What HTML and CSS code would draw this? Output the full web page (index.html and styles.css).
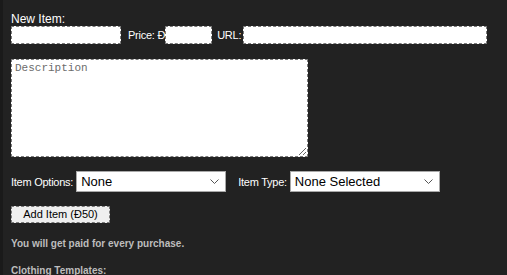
FILE: index.html
```html
<!DOCTYPE html>
<html>
<head>
<meta charset="utf-8">
<link rel="stylesheet" href="styles.css">
</head>
<body>
<div class="page">
  <div class="label-line">New Item:</div>
  <div class="row-inputs">
    <input class="in in-name" type="text">
    <span class="lbl lbl-price">Price: Đ</span><input class="in in-price" type="text">
    <span class="lbl lbl-url">URL:</span><input class="in in-url" type="text">
  </div>
  <textarea class="desc" placeholder="Description"></textarea>
  <div class="row-selects">
    <span class="lbl">Item Options:</span>
    <span class="sel-wrap">
      <select class="sel"><option>None</option></select>
      <svg class="chev" width="9" height="5" viewBox="0 0 9 5"><path d="M0.5 0.5 L4.5 4.5 L8.5 0.5" fill="none" stroke="#555" stroke-width="1"/></svg>
    </span>
    <span class="lbl lbl-type">Item Type:</span>
    <span class="sel-wrap">
      <select class="sel"><option>None Selected</option></select>
      <svg class="chev" width="9" height="5" viewBox="0 0 9 5"><path d="M0.5 0.5 L4.5 4.5 L8.5 0.5" fill="none" stroke="#555" stroke-width="1"/></svg>
    </span>
  </div>
  <button class="add-btn" type="button">Add Item (Đ50)</button>
  <p class="note">You will get paid for every purchase.</p>
  <p class="note note-templates">Clothing Templates:</p>
</div>
</body>
</html>
```
FILE: styles.css
```css
html, body {
  margin: 0;
  padding: 0;
  background: #222222;
  height: 100%;
  overflow: hidden;
}
.page {
  box-sizing: border-box;
  min-height: 100%;
  border-left: 3px solid #1a1a1a;
  padding: 12px 0 0 8px;
  font-family: "Liberation Sans", Arial, sans-serif;
  font-size: 11px;
  color: #ffffff;
}
.label-line {
  height: 14px;
  line-height: 14px;
  font-size: 12px;
}
.row-inputs {
  display: flex;
  align-items: center;
  height: 18px;
}
.in {
  box-sizing: border-box;
  height: 18px;
  margin: 0;
  padding: 0 2px;
  background: #ffffff;
  border: 1px dashed #7a7a7a;
  outline: none;
  font-size: 12px;
}
.in-name { width: 110px; }
.in-price { width: 47px; }
.in-url { width: 244px; }
.lbl {
  font-size: 11px;
  letter-spacing: -0.25px;
  white-space: nowrap;
}
.lbl-price { margin-left: 7px; }
.lbl-url { margin-left: 5px; margin-right: 2px; }
.desc {
  display: block;
  box-sizing: border-box;
  width: 297px;
  height: 98px;
  margin: 15px 0 0 0;
  padding: 2px 3px;
  background: #ffffff;
  border: 1px dashed #7a7a7a;
  outline: none;
  font-family: "Liberation Mono", "Courier New", monospace;
  font-size: 11px;
}
.desc::placeholder { color: #6d6d6d; }
.row-selects {
  display: flex;
  align-items: center;
  margin-top: 14px;
  height: 21px;
}
.sel-wrap {
  position: relative;
  display: inline-block;
  margin-left: 3px;
  height: 21px;
}
.sel {
  -webkit-appearance: none;
  appearance: none;
  box-sizing: border-box;
  width: 150px;
  height: 21px;
  margin: 0;
  padding: 0 0 0 4px;
  background: #ffffff;
  border: 1px solid #a9a9a9;
  border-radius: 0;
  color: #000000;
  font-family: "Liberation Sans", Arial, sans-serif;
  font-size: 13px;
  outline: none;
}
.chev {
  position: absolute;
  right: 7px;
  top: 8px;
}
.lbl-type { margin-left: 12px; }
.add-btn {
  display: block;
  box-sizing: border-box;
  width: 99px;
  height: 17px;
  margin: 14px 0 0 0;
  padding: 0;
  background: #efefef;
  border: 1px dashed #7a7a7a;
  color: #000000;
  font-family: "Liberation Sans", Arial, sans-serif;
  font-size: 11px;
  line-height: 15px;
}
.note {
  margin: 15px 0 0 0;
  font-size: 10px;
  font-weight: bold;
  color: #bdbdbd;
  line-height: 12px;
}
.note-templates { margin-top: 15px; }
```
